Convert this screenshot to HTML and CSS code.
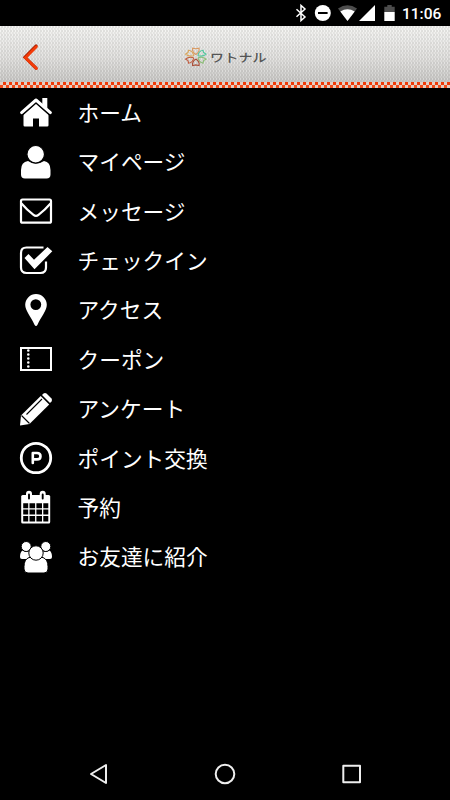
FILE: index.html
```html
<!DOCTYPE html>
<html lang="ja">
<head>
<meta charset="utf-8">
<title>ワトナル</title>
<link rel="stylesheet" href="styles.css">
</head>
<body>
<div class="screen">
  <div class="status">
    <svg class="status-icons" width="102" height="26" viewBox="294 0 102 26">
      <path d="M296.500 9.200l8.500 7.800-4 3.600V5.400l4 3.600-8.500 7.800" fill="none" stroke="#fff" stroke-width="1.500"/>
      <circle cx="322.800" cy="13" r="8" fill="#fff"/><path d="M318 13h9.600" stroke="#000" stroke-width="2"/>
      <path d="M338 8.500q9.500-6.500 19 0L347.500 21z" fill="#4d4d4d"/>
      <path d="M340.300 11.500q7.200-4.500 14.400 0L347.500 21z" fill="#fff"/>
      <path d="M375 5v16h-16z" fill="#fff"/>
      <path d="M384.300 12V6.700h3V5h4.400v1.700h3V12z" fill="#4d4d4d"/>
      <path d="M384.300 12h10.400v9h-10.400z" fill="#fff"/>
    </svg>
    <span class="clock">11:06</span>
  </div>
  <header class="header">
    <svg class="back" width="18" height="28" viewBox="0 0 18 28"><path d="M15 3L4 14.300l11 10.800" fill="none" stroke="#a31c00" stroke-width="3.200" stroke-linecap="round"/><path d="M15.300 3.800L4.400 14.700l11 10.800" fill="none" stroke="#f23b08" stroke-width="2.800" stroke-linecap="round"/></svg>
    <div class="brand">
      <svg width="24" height="20" viewBox="0 0 24 20" fill="none" stroke-width="1.100">
        <path d="M11.800 7.500Q8 5 8.500 1.200l3.300.6 3.300-.6Q15.700 5 11.800 7.500" stroke="#d99a62"/>
        <path d="M14 8.700Q14.500 4 19 3.200l.6 2.400 2.400 1.400Q19 10 14 8.700" stroke="#4fc79d"/>
        <path d="M14 10.700q5-1.500 8 1.500l-2.400 1.400-.6 2.600q-4-.7-5-5.500" stroke="#8bbd75"/>
        <path d="M11.800 12q4 2.500 3.300 6.500l-3.300-.6-3.300.6Q8 14.500 11.800 12" stroke="#a9503a"/>
        <path d="M9.600 10.700Q9 15.500 4.600 16.200L4 13.600l-2.400-1.400q3-3 8-1.500" stroke="#c05a3c"/>
        <path d="M9.600 8.700Q4.600 10 1.600 7L4 5.600l.6-2.400q4.400.8 5 5.500" stroke="#d9a458"/>
      </svg>
      <span class="brand-name">ワトナル</span>
    </div>
    <div class="stitch"></div>
  </header>
  <nav class="menu">
    <a class="item"><svg class="icon" viewBox="0 -1 32 32"><path d="M22.300 1h5v10h-5z" fill="#fff"/><path d="M3.500 17.500L16 6.500l12.500 11v10.700q0 1.300-1.300 1.300H19v-8h-6v8H4.800q-1.300 0-1.300-1.300z" fill="#fff"/><path d="M1 17.500L16 4.300l15 13.200" fill="none" stroke="#000" stroke-width="4"/><path d="M1.600 15.600L16 3l14.400 12.600" fill="none" stroke="#fff" stroke-width="3" stroke-linejoin="round" stroke-linecap="round"/></svg><span>ホーム</span></a>
    <a class="item"><svg class="icon" viewBox="0 0 32 32"><path d="M8 15q8 5 16 0 6.500 1 6.500 9v4.500q0 4-4 4h-21.500q-4 0-4-4V24q0-8 7-9z" fill="#fff"/><circle cx="15.700" cy="8.300" r="8.800" fill="#fff" stroke="#000" stroke-width="1.200"/></svg><span>マイページ</span></a>
    <a class="item"><svg class="icon" viewBox="0 0 32 32"><rect x="1" y="4.500" width="30" height="23.200" rx="1.500" fill="none" stroke="#fff" stroke-width="2.200"/><path d="M1.500 8.500Q7 15 13.500 19.800q2.500 2 5 0Q25 15 30.500 8.500" fill="none" stroke="#fff" stroke-width="2.200"/></svg><span>メッセージ</span></a>
    <a class="item"><svg class="icon" viewBox="0 -.5 32 32"><path d="M23.500 3H6.500Q1 3 1 8.500v14.500q0 5.500 5.500 5.500h14q5.500 0 5.500-5.500v-6" fill="none" stroke="#fff" stroke-width="2.200"/><path d="M4.500 13.500l4-4 5.500 5.800L27.500 2.500l4.800 4.300L14.500 24.700z" fill="#fff"/></svg><span>チェックイン</span></a>
    <a class="item"><svg class="icon" viewBox="0 0 32 32"><path fill-rule="evenodd" d="M16 0a10.800 10.800 0 0 1 10.800 10.700c0 6-5.700 12-9.300 20q-1.500 2.600-3 0c-3.500-8-9.300-14-9.300-20A10.800 10.800 0 0 1 16 0m-.2 5.200a5.400 5.400 0 1 0 0 10.800 5.400 5.400 0 0 0 0-10.800" fill="#fff"/></svg><span>アクセス</span></a>
    <a class="item"><svg class="icon" viewBox="0 0 32 32"><rect x="1" y="5" width="30" height="22" fill="none" stroke="#fff" stroke-width="2"/><path d="M8.300 7.500v19" stroke="#fff" stroke-width="2.600" stroke-linecap="round" stroke-dasharray="0 4"/></svg><span>クーポン</span></a>
    <a class="item"><svg class="icon" viewBox="0 0 32 32"><path d="M0 32.500l1-10L20.700 3l8.500 8.500L9.500 31z" fill="#fff"/><path d="M22 2l1.500-1.500q1.500-1 3 0l5 5q1 1.500 0 3L30 10z" fill="#fff"/><path d="M1.500 22.500l8 8M6.500 21.500L22 6" fill="none" stroke="#000" stroke-width="1.100"/></svg><span>アンケート</span></a>
    <a class="item"><svg class="icon" viewBox="0 0 32 32"><circle cx="16" cy="16" r="14.700" fill="none" stroke="#fff" stroke-width="2.800"/><path d="M12.800 21V11h4.200q3.500 0 3.500 3.200t-3.500 3.200h-4.200" fill="none" stroke="#fff" stroke-width="2.600" stroke-linecap="round" stroke-linejoin="round"/></svg><span>ポイント交換</span></a>
    <a class="item"><svg class="icon" viewBox="0 0 32 32"><rect x="1.200" y="4" width="29" height="28.500" rx="1.500" fill="#fff"/><path d="M3.200 12.200h5v5h-5zm6.300 0h5.600v5H9.500zm6.900 0H22v5h-5.600zm6.900 0h5v5h-5zM3.200 18.500h5v5h-5zm6.300 0h5.600v5H9.500zm6.900 0H22v5h-5.600zm6.900 0h5v5h-5zM3.200 24.900h5v5.500h-5zm6.300 0h5.600v5.500H9.500zm6.900 0H22v5.500h-5.600zm6.900 0h5v5.500h-5z" fill="#000"/><path d="M9 7V2.800M22.700 7V2.800" stroke="#fff" stroke-width="6" stroke-linecap="round"/><path d="M9 7.500V3.500M22.700 7.500V3.500" stroke="#000" stroke-width="1.900" stroke-linecap="round"/></svg><span>予約</span></a>
    <a class="item"><svg class="icon" viewBox="0 0 32 32"><g fill="#fff"><path d="M2.500 9.500q4 2.500 7.500 0v8.500H2q-2 0-2-2 0-5 2.500-6.500M29.500 9.500q-4 2.500-7.500 0v8.500h8q2 0 2-2 0-5-2.500-6.500"/><g stroke="#000"><circle cx="6.200" cy="5.500" r="5"/><circle cx="25.800" cy="5.500" r="5"/><path d="M9 16.500h14q5 2 5 9v2.500q0 4-4 4H8q-4 0-4-4v-2.500q0-7 5-9z"/><circle cx="16" cy="12" r="7.200"/></g></g></svg><span>お友達に紹介</span></a>
  </nav>
  <footer class="softkeys">
    <svg width="22" height="24" viewBox="0 0 22 24"><path d="M18 3v18L3 12z"/></svg>
    <svg width="24" height="24" viewBox="0 0 24 24"><circle cx="12" cy="12" r="9.300"/></svg>
    <svg width="22" height="24" viewBox="0 0 22 24"><rect x="3.300" y="3.800" width="16.700" height="16.500"/></svg>
  </footer>
</div>
</body>
</html>
```

FILE: styles.css
```css
* { box-sizing: border-box; }
body { margin: 0; background: #000; color: #fff; font-family: "Noto Sans CJK JP", sans-serif; }
.screen { width: 450px; height: 800px; display: flex; flex-direction: column; overflow: hidden; }
.status { height: 26px; display: flex; justify-content: flex-end; align-items: center; padding-right: 9px; gap: 6px; }
.clock { font: 500 15.500px/26px Roboto, sans-serif; width: 39px; white-space: nowrap; padding-top: 1px; }
.header {
  height: 62px; display: grid; grid-template-columns: 184px 1fr; grid-template-rows: 56px 6px; align-items: center;
  background:
    conic-gradient(rgba(90,90,85,.12) 25%, transparent 0 50%, rgba(90,90,85,.08) 0 75%, rgba(255,255,255,.2) 0) 0 0 / 3px 4px,
    linear-gradient(#f4f4f2, #e2e1df 50%, #c4c3c1);
}
.back { margin: 6px 0 0 21px; }
.brand { display: flex; align-items: center; padding-top: 6px; }
.brand-name { font-size: 14px; line-height: 18px; font-weight: 500; color: #555; letter-spacing: .2px; margin-left: 2px; transform: scaleY(.85); }
.stitch {
  grid-column: 1 / 3; height: 6px;
  background: conic-gradient(#f03a08 25%, #e3cfc4 0 50%, #f04c1c 0 75%, #e3cfc4 0) 0 0 / 6px 6px repeat-x;
}
.menu { display: flex; flex-direction: column; height: 494px; }
.item { flex: 1; display: flex; align-items: center; padding-left: 20px; font-size: 21.700px; line-height: 32px; }
.item span { padding-bottom: 2px; }
.icon { width: 32px; height: 32px; margin: 0 25.500px 1px 0; overflow: visible; flex: none; }
.softkeys { margin-top: auto; height: 52px; display: flex; justify-content: space-between; align-items: center; padding: 0 88px; }
.softkeys svg { fill: none; stroke: #eee; stroke-width: 2; stroke-linejoin: round; }
```
